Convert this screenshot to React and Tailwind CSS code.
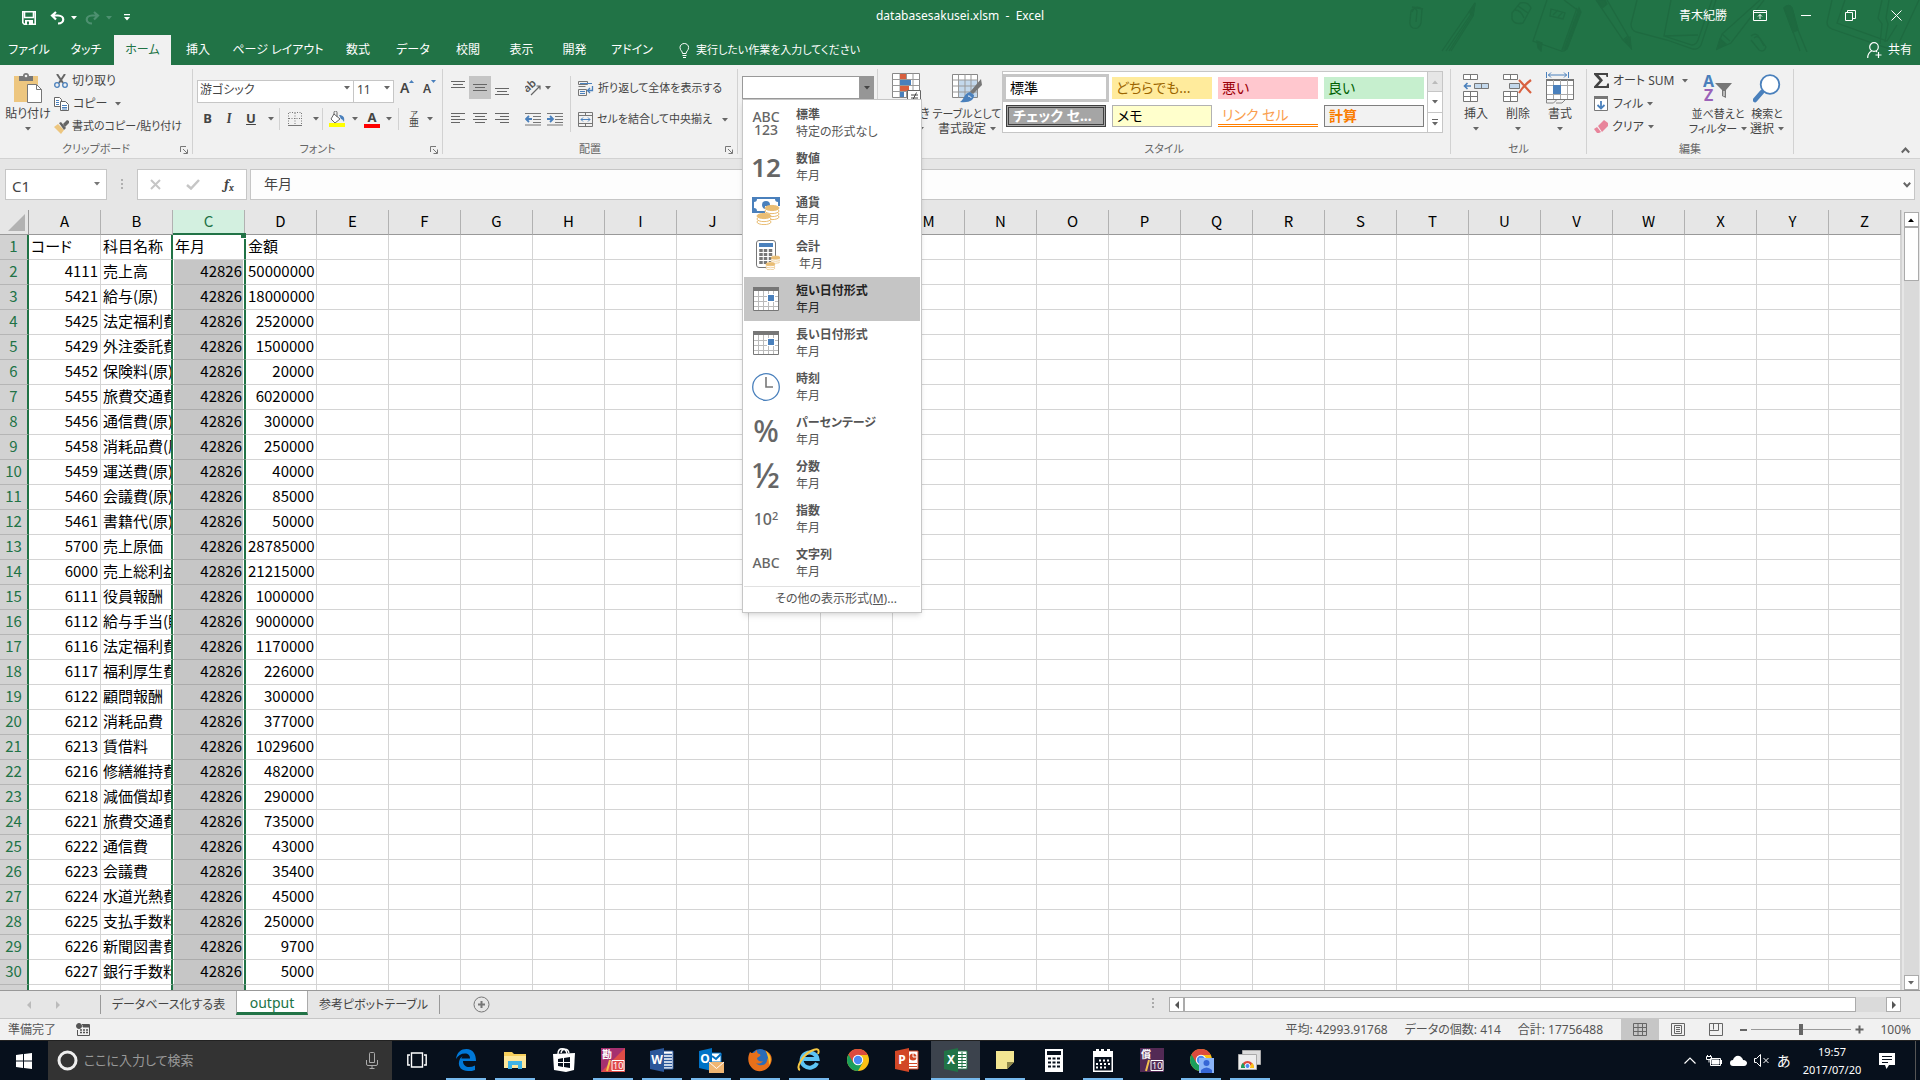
import React, { useState } from 'react';

const columns = 'ABCDEFGHIJKLMNOPQRSTUVWXYZ'.split('');

const rows = [
  ['コード', '科目名称', '年月', '金額'],
  [4111, '売上高', 42826, 50000000],
  [5421, '給与(原)', 42826, 18000000],
  [5425, '法定福利費(原)', 42826, 2520000],
  [5429, '外注委託費(原)', 42826, 1500000],
  [5452, '保険料(原)', 42826, 20000],
  [5455, '旅費交通費(原)', 42826, 6020000],
  [5456, '通信費(原)', 42826, 300000],
  [5458, '消耗品費(原)', 42826, 250000],
  [5459, '運送費(原)', 42826, 40000],
  [5460, '会議費(原)', 42826, 85000],
  [5461, '書籍代(原)', 42826, 50000],
  [5700, '売上原価', 42826, 28785000],
  [6000, '売上総利益', 42826, 21215000],
  [6111, '役員報酬', 42826, 1000000],
  [6112, '給与手当(販)', 42826, 9000000],
  [6116, '法定福利費', 42826, 1170000],
  [6117, '福利厚生費', 42826, 226000],
  [6122, '顧問報酬', 42826, 300000],
  [6212, '消耗品費', 42826, 377000],
  [6213, '賃借料', 42826, 1029600],
  [6216, '修繕維持費', 42826, 482000],
  [6218, '減価償却費', 42826, 290000],
  [6221, '旅費交通費', 42826, 735000],
  [6222, '通信費', 42826, 43000],
  [6223, '会議費', 42826, 35400],
  [6224, '水道光熱費', 42826, 45000],
  [6225, '支払手数料', 42826, 250000],
  [6226, '新聞図書費', 42826, 9700],
  [6227, '銀行手数料', 42826, 5000],
];

const ribbonTabs = [
  { label: 'ファイル', width: 'w-[58px]' },
  { label: 'タッチ', width: 'w-[56px]' },
  { label: 'ホーム', width: 'w-[57px]' },
  { label: '挿入', width: 'w-[54px]' },
  { label: 'ページ レイアウト', width: 'w-[106px]' },
  { label: '数式', width: 'w-[54px]' },
  { label: 'データ', width: 'w-[56px]' },
  { label: '校閲', width: 'w-[54px]' },
  { label: '表示', width: 'w-[53px]' },
  { label: '開発', width: 'w-[53px]' },
  { label: 'アドイン', width: 'w-[62px]' },
];

/* ---------- small shared pieces ---------- */

const Caret = ({ className = 'text-[#666]' }) => (
  <svg width="6" height="4" viewBox="0 0 6 4" className={`shrink-0 ${className}`} aria-hidden="true">
    <path d="M0 0h6L3 3.5z" fill="currentColor" />
  </svg>
);

const Launcher = () => (
  <button aria-label="詳細" className="absolute right-1 bottom-0 h-2 w-2">
    <svg width="8" height="8" viewBox="0 0 8 8" fill="none" stroke="#777">
      <path d="M.5 6V.5H6M3 3l4 4M7.500 3.500v4h-4" />
    </svg>
  </button>
);

const Group = ({ title, width, launcher, children }) => (
  <section className={`relative my-1 flex shrink-0 flex-col border-r border-[#d2d2d2] ${width}`}>
    <div className="flex flex-1">{children}</div>
    <h2 className="h-[14px] text-center text-[11px] leading-[18px] text-[#666]">{title}</h2>
    {launcher && <Launcher />}
  </section>
);

const Divider = () => <span className="h-[22px] w-px bg-[#d2d2d2]" />;

const IconButton = ({ label, width = 'w-[22px]', active, children }) => (
  <button aria-label={label} className={`flex h-[23px] ${width} items-center justify-center ${active ? 'bg-[#c5c5c5]' : ''}`}>
    {children}
  </button>
);

const SmallButton = ({ icon, label, caret, wide }) => (
  <button className="flex h-[23px] items-center gap-1 text-xs leading-4 whitespace-nowrap">
    {icon}
    <span>{label}</span>
    {caret && <Caret className={wide ? 'ml-1 text-[#666]' : 'text-[#666]'} />}
  </button>
);

const BigButton = ({ icon, line1, line2, width }) => (
  <button className={`flex flex-col items-center pt-1 text-xs leading-[15px] whitespace-nowrap ${width}`}>
    <span className="flex h-[30px] items-center justify-center">{icon}</span>
    <span className="mt-[3px]">{line1}</span>
    <span className="flex h-[15px] items-center gap-1">
      {line2}
      <Caret />
    </span>
  </button>
);

const Lines = ({ d }) => (
  <svg width="14" height="14" viewBox="0 0 14 14" stroke="#666" fill="none" aria-hidden="true">
    <path d={d} />
  </svg>
);

/* ---------- ribbon icons ---------- */

const PasteIcon = () => (
  <svg width="30" height="30" viewBox="0 0 30 30">
    <rect x="1" y="3" width="24" height="26" fill="#edc67f" />
    <path d="M6 8V3h4a3 3 0 0 1 6 0h4v5z" fill="#777" />
    <circle cx="13" cy="3" r="1.300" fill="#f1f1f1" />
    <path d="M14.500 11.500h9l5 5v13h-14z" fill="#fff" stroke="#777" />
    <path d="M23.500 11.500v5h5" fill="none" stroke="#777" />
  </svg>
);

const CutIcon = () => (
  <svg width="14" height="14" viewBox="0 0 14 14" fill="none">
    <path d="M3 0l6 9M11 0L5 9" stroke="#666" strokeWidth="2" />
    <circle cx="3" cy="11" r="2.300" stroke="#4a80bc" strokeWidth="1.300" />
    <circle cx="11" cy="11" r="2.300" stroke="#4a80bc" strokeWidth="1.300" />
  </svg>
);

const CopyIcon = () => (
  <svg width="15" height="14" viewBox="0 0 15 14" fill="#fff" stroke="#666">
    <path d="M.5.500h5l2 2v7h-7z" />
    <path d="M2 3.500h3M2 5.500h3M2 7.500h3" stroke="#4a80bc" />
    <path d="M6.500 4.500h5l3 3v6h-8z" />
    <path d="M8 8.500h5M8 10.500h5M8 12h5" stroke="#4a80bc" />
  </svg>
);

const PainterIcon = () => (
  <svg width="16" height="14" viewBox="0 0 16 14">
    <path d="M0 7l4-3 6 6-3 4z" fill="#edc67f" />
    <path d="M5 3l2-1 5 6-2 2z" fill="#666" />
    <path d="M9 4l4-4 2 1v2l-4 4z" fill="#666" />
  </svg>
);

const WrapIcon = () => (
  <svg width="16" height="15" viewBox="0 0 16 15" fill="none">
    <path d="M.5.500h9v3h-9zM.5 5.500h7M.5 8.500h8v6h-8z" stroke="#777" />
    <path d="M2 2.500h12M2 10.500h5M2 12.500h5" stroke="#4a80bc" />
    <path d="M14.500 5v4.500h-5M12 7l-2.500 2.500L12 12" stroke="#4a80bc" strokeWidth="1.300" />
  </svg>
);

const MergeIcon = () => (
  <svg width="15" height="15" viewBox="0 0 15 15" fill="none">
    <path d="M.5.500h14v14H.5zM.5 3.500h14M.5 11.500h14M7.500.500v3M7.500 11.500v3" stroke="#777" />
    <path d="M3 7.500h9M5 5.500l-2 2 2 2M10 5.500l2 2-2 2" stroke="#4a80bc" />
  </svg>
);

const IndentIcon = ({ flip }) => (
  <svg width="16" height="14" viewBox="0 0 16 14" fill="none">
    <path d="M0 1.500h16M8 4.500h8M8 7.500h8M8 10.500h8M0 13h16" stroke="#777" />
    {flip ? (
      <path d="M0 7h5M3 4l3 3-3 3" stroke="#4a80bc" strokeWidth="1.800" />
    ) : (
      <path d="M7 7H2M4 4L1 7l3 3" stroke="#4a80bc" strokeWidth="1.800" />
    )}
  </svg>
);

const OrientationIcon = () => (
  <svg width="17" height="17" viewBox="0 0 17 17">
    <text x="0" y="11" fontSize="11" fontWeight="600" fontFamily="Noto Sans" fill="#555" transform="rotate(-42 5 10)">ab</text>
    <path d="M6 16l9-9M11.500 7H15v3.500" stroke="#666" fill="none" strokeWidth="1.200" />
  </svg>
);

const BucketIcon = () => (
  <svg width="17" height="16" viewBox="0 0 17 16">
    <path d="M5 3l6 5-5 4-4-4z" fill="#fff" stroke="#666" />
    <path d="M5 4V1.500a1.500 1.500 0 0 1 3 0V6" fill="none" stroke="#666" />
    <path d="M10 4c4 0 6 2 5 7-1-2-2-3-3-3z" fill="#4a80bc" />
    <rect x="0" y="12" width="16" height="4" fill="#ff0" />
  </svg>
);

const ConditionalIcon = () => (
  <svg width="30" height="30" viewBox="0 0 30 30">
    <path d="M.5.500h27v24H.5z" fill="#fff" stroke="#888" />
    <path d="M.5 6.500h27M.5 12.500h27M.5 18.500h27M8 .5v24M14.500.500v24M21 .5v24" stroke="#999" />
    <path d="M8 1h6v5H8zM8 13h9v5H8z" fill="#d9603f" />
    <path d="M8 7h11v5H8zM8 19h4v5H8z" fill="#4a80bc" />
    <path d="M15.500 17.500h13v12h-13z" fill="#fff" stroke="#666" />
    <path d="M19 22h7M19 25h7M24.500 19.500l-4 8" stroke="#444" />
  </svg>
);

const TableFormatIcon = () => (
  <svg width="30" height="29" viewBox="0 0 30 29">
    <path d="M.5.500h25v23H.5z" fill="#fff" stroke="#888" />
    <path d="M7 6h18v17H7z" fill="#c3d8ec" />
    <path d="M.5 6h25M.5 12h25M.5 18h25M6.500.500v23M13 .5v23M19 .5v23" stroke="#999" />
    <path d="M29 5l1 6-9 9-3-2z" fill="#777" />
    <path d="M18 18l4 3c0 5-4 8-14 7 4-2 4-9 10-10z" fill="#4a80bc" />
    <path d="M16 22c2 0 3 1 3 2" stroke="#fff" fill="none" />
  </svg>
);

const InsertIcon = () => (
  <svg width="26" height="28" viewBox="0 0 26 28" fill="#fff" stroke="#777">
    <path d="M.5.500h14v5H.5zM7.500.500v5M.5 17.500h14v10H.5zM7.500 17.500v10M.5 22.500h14" />
    <path d="M11.500 9.500h14v5h-14zM18.500 9.500v5" fill="#c3d8ec" />
    <path d="M8 12H2M4.500 9L1.500 12l3 3" fill="none" stroke="#4a80bc" strokeWidth="1.600" />
  </svg>
);

const DeleteIcon = () => (
  <svg width="30" height="28" viewBox="0 0 30 28" fill="#fff" stroke="#777">
    <path d="M.5.500h14v5H.5zM7.500.500v5M.5 17.500h14v10H.5zM7.500 17.500v10M.5 22.500h14" />
    <path d="M6.500 9.500h10v5h-10z" fill="#c3d8ec" />
    <path d="M16 6c4 4 8 9 12 13M28 6c-4 3-9 8-12 13" fill="none" stroke="#d9603f" strokeWidth="2.200" />
  </svg>
);

const FormatIcon = () => (
  <svg width="28" height="32" viewBox="0 0 28 32" fill="none">
    <path d="M.5 0v6M22.500 0v6M2 3h19M5 .5L2.500 3 5 5.500M18 .5L20.500 3 18 5.500" stroke="#4a80bc" />
    <path d="M.5 7.500h27v20H.5z" fill="#fff" stroke="#777" />
    <path d="M0 7h28v2H0z" fill="#777" />
    <path d="M7.500 8v19M14.500 8v19M21.500 8v19M1 13.500h26M1 22.500h26" stroke="#aaa" />
    <path d="M7 13h8v9H7z" fill="#4a80bc" />
    <path d="M.5 28v3h7l3-3M10 31h6l3-3" stroke="#888" />
  </svg>
);

const SortIcon = () => (
  <svg width="30" height="30" viewBox="0 0 30 30">
    <text x="0" y="14" fontSize="16" fontWeight="700" fontFamily="Noto Sans" fill="#4a80bc">A</text>
    <text x="1" y="28" fontSize="16" fontWeight="700" fontFamily="Noto Sans" fill="#9b62b8">Z</text>
    <path d="M12 10h17l-6 7v8l-4-2v-6z" fill="#777" />
    <path d="M21 18v5" stroke="#fff" />
  </svg>
);

const FindIcon = () => (
  <svg width="28" height="29" viewBox="0 0 28 29" fill="none" stroke="#4a80bc">
    <path d="M9 18l-7 8" strokeWidth="4.500" strokeLinecap="round" />
    <circle cx="17" cy="10.500" r="9.300" fill="#fff" strokeWidth="1.800" />
  </svg>
);

const SigmaIcon = () => (
  <svg width="15" height="15" viewBox="0 0 15 15">
    <path d="M0 0h14v4h-1.500l-.5-2H4.500L9 7.200 4 13h8.500l.8-2.500H15V15H0v-1.500L5.500 7.500 0 1.500z" fill="#444" />
  </svg>
);

const FillIcon = () => (
  <svg width="15" height="16" viewBox="0 0 15 16" fill="none">
    <path d="M.5 1.500h13v13H.5z" fill="#fff" stroke="#777" />
    <path d="M0 0h14v3H0z" fill="#777" />
    <path d="M7 5v7M3.500 9L7 12.500 10.500 9" stroke="#4a80bc" strokeWidth="1.800" />
  </svg>
);

const EraserIcon = () => (
  <svg width="14" height="13" viewBox="0 0 14 13">
    <path d="M4 6l6-6 4 3v3l-6 6z" fill="#e8859b" />
    <path d="M3 7l4 5-2 1H3L0 9z" fill="#e8859b" />
  </svg>
);

/* ---------- number format menu ---------- */

const CalendarGlyph = () => (
  <svg width="26" height="24" viewBox="0 0 26 24">
    <path d="M.5.500h25v23H.5z" fill="#fff" stroke="#777" />
    <path d="M0 0h26v4H0z" fill="#777" />
    <path d="M5.500 4v19M10.500 4v19M15.500 4v19M20.500 4v19M1 9.500h24M1 14.500h24M1 19.500h24" stroke="#bbb" />
    <path d="M14 7h8v8h-8z" fill="#fff" />
    <path d="M15 8h6v6h-6z" fill="#4a80bc" />
  </svg>
);

const Coins = ({ x, y, n }) => (
  <g>
    {Array.from({ length: n }, (_, i) => (
      <ellipse key={i} cx={x} cy={y + (n - 1 - i) * 3} rx="7" ry="2.600" fill={i === n - 1 ? '#e9bd74' : '#fff'} stroke="#e9bd74" />
    ))}
  </g>
);

const MoneyGlyph = () => (
  <svg width="28" height="28" viewBox="0 0 28 28">
    <path d="M0 0h28v16H0z" fill="#4a80bc" />
    <path d="M5 2h18q0 3 3 3v6q-3 0-3 3H5q0-3-3-3V5q3 0 3-3z" fill="#fff" />
    <circle cx="14" cy="8" r="4" fill="#4a80bc" />
    <path d="M13 9h15v14H13z" fill="#fff" />
    <Coins x={20} y={11} n={4} />
    <Coins x={12} y={19} n={3} />
  </svg>
);

const CalculatorGlyph = () => (
  <svg width="28" height="30" viewBox="0 0 28 30">
    <rect x="4.500" y=".5" width="19" height="27" rx="2.500" fill="#fff" stroke="#777" />
    <path d="M7 3h14v4H7z" fill="#4a80bc" />
    <path d="M9 9v16M13.500 9v16M18.500 9v16" stroke="#777" strokeWidth="3.500" strokeDasharray="3 1" />
    <path d="M20 16h8v8h-8zM15 22h10v7H15z" fill="#fff" />
    <g transform="translate(8 4) scale(.65)">
      <Coins x={24} y={21} n={3} />
      <Coins x={16} y={31} n={3} />
    </g>
  </svg>
);

const ClockGlyph = () => (
  <svg width="28" height="28" viewBox="0 0 28 28" fill="none">
    <circle cx="14" cy="14" r="13.300" fill="#fff" stroke="#4a80bc" strokeWidth="1.300" />
    <path d="M14 4v10h7" stroke="#777" strokeWidth="1.600" />
  </svg>
);

const formats = [
  { name: '標準', sample: '特定の形式なし', icon: <span className="text-center text-sm leading-[13px] font-medium">ABC<br />123</span> },
  { name: '数値', sample: '年月', icon: <span className="text-[26px] font-semibold">12</span> },
  { name: '通貨', sample: '年月', icon: <MoneyGlyph /> },
  { name: '会計', sample: '\u00a0年月', icon: <CalculatorGlyph /> },
  { name: '短い日付形式', sample: '年月', icon: <CalendarGlyph /> },
  { name: '長い日付形式', sample: '年月', icon: <CalendarGlyph /> },
  { name: '時刻', sample: '年月', icon: <ClockGlyph /> },
  { name: 'パーセンテージ', sample: '年月', icon: <span className="text-[30px] font-medium">%</span> },
  { name: '分数', sample: '年月', icon: <span className="text-[34px] font-medium">½</span> },
  { name: '指数', sample: '年月', icon: <span className="text-base font-medium">10<sup className="text-[11px]">2</sup></span> },
  { name: '文字列', sample: '年月', icon: <span className="text-sm font-medium">ABC</span> },
];

const FormatMenu = () => (
  <div role="menu" className="absolute top-full left-0 z-20 w-[180px] border border-[#c6c6c6] bg-white p-px shadow-md">
    {formats.map((f) => (
      <button
        key={f.name}
        role="menuitem"
        className={`flex h-11 w-full items-center text-left ${f.name === '短い日付形式' ? 'bg-[#c5c5c5] text-[#222]' : 'text-[#555]'}`}>
        <span className="flex w-[44px] shrink-0 items-center justify-center leading-none text-[#666]">{f.icon}</span>
        <span className="ml-2 text-xs leading-[17px] whitespace-nowrap">
          <b className="block">{f.name}</b>
          <span className="block">{f.sample}</span>
        </span>
      </button>
    ))}
    <button role="menuitem" className="h-[25px] w-full border-t border-[#e1e1e1] pl-2 text-center text-xs text-[#555]">
      その他の表示形式(<u>M</u>)...
    </button>
  </div>
);

/* ---------- title bar and tabs ---------- */

const Doodles = () => (
  <svg className="absolute top-0 right-0" width="520" height="52" viewBox="0 0 520 52" fill="none" stroke="#1e6a40" strokeWidth="1.300" aria-hidden="true">
    <path d="M12 12q3-8 10-3l-1 14q-2 7-8 5-4-2-3-7l1-10q4-5 6 0l-1 11M12 7l11 2" />
    <path d="M42 51l27-39 6-9-2 13-22 35M46 51l25-37M49 51l23-36M69 12l5 3" />
    <path d="M112 13l8-10q8-2 11 5l-8 15q-9 2-11-4zM115 10q6 0 9 8M118 6l10 7" />
    <path d="M147 0l-14 41 28 10q4 1 6-3l13-36-16-12M177 8l-15 42M151 9l14 4-2 6-13-3zM153 15l5-5M158 17l5-5" />
    <path d="M196 0l27 40 8 8-3-12L207 0M223 40l5-4" />
    <path d="M237 0l-6 24q0 6 5 8l31 8 26 9q5 1 8-4l15-45M271 0l-7 36 34-1M264 36l28 9q4 0 6-5l14-40" />
    <path d="M360 0l-38 34-5 15 14-6 33-43M322 34l8 7" />
    <path d="M351 36q5-4 8 1l7 10q-2 6-7 3l-8-10M354 38q4-3 6 1l4 7" />
    <path d="M384 8q5-5 8 0l6 22 9 22M384 8l9 24 7 19" />
    <path d="M432 0l-5 22q0 5 5 7l58 20q6 1 8-4l21-45M445 0l-8 23 50 18 10-16M482 0l-4 18 4 6-2 20M489 0l-3 18 2 6-3 18" />
    <path d="M384 8q5-5 8 0l6 22-5 2zM317 49l3-10 6 5zM225 40l5-3 1 11zM197 0h8l2 4-5 4zM69 12l6-9-2 12zM137 41l5 2-1 8-3-3zM164 49l15-41 2 4-14 37z" fill="#1e6a40" />
  </svg>
);

const TitleBar = () => (
  <header className="relative bg-[#217346] text-white">
    <Doodles />
    <div className="relative grid h-[35px] grid-cols-3 items-center text-xs">
      <div className="flex items-center pl-[22px]">
        <button aria-label="上書き保存" className="w-[28px]">
          <svg width="14" height="14" viewBox="0 0 14 14" fill="none" stroke="#fff" strokeWidth="1.600">
            <path d="M.8.800h12.400v12.400H2.300L.8 11.700z" />
            <path d="M2.500 1v5.500h9V1" />
            <path d="M3 9h8v4H3z" fill="#fff" stroke="none" />
            <path d="M5 10.500h2v3H5z" fill="#217346" stroke="none" />
          </svg>
        </button>
        <button aria-label="元に戻す" className="flex w-[35px] items-center gap-[6px]">
          <svg width="15" height="14" viewBox="0 0 15 14" fill="none" stroke="#fff" strokeWidth="2.200">
            <path d="M6 1L2 4.500 6 8.500M2 4.500h6c7 0 7 8 0 8" />
          </svg>
          <Caret className="text-white" />
        </button>
        <button aria-label="やり直し" className="flex w-[39px] items-center gap-[6px]">
          <svg width="15" height="14" viewBox="0 0 15 14" fill="none" stroke="#4d9070" strokeWidth="2.200">
            <path d="M9 1l4 3.500-4 4M13 4.500H7c-7 0-7 8 0 8" />
          </svg>
          <Caret className="text-[#4d9070]" />
        </button>
        <button aria-label="クイック アクセス ツール バーのカスタマイズ">
          <svg width="6" height="7" viewBox="0 0 6 7" fill="#fff">
            <path d="M0 0h6v1.300H0zM0 3h6L3 6.500z" />
          </svg>
        </button>
      </div>
      <h1 className="pb-1 text-center whitespace-pre">databasesakusei.xlsm  -  Excel</h1>
      <div className="flex items-center justify-end pb-1">
        <span className="mr-[26px]">青木紀勝</span>
        <button aria-label="リボンの表示オプション" className="flex w-[46px]">
          <svg width="14" height="11" viewBox="0 0 14 11" fill="none" stroke="#fff">
            <path d="M.5.500h13v10H.5zM.5 2.500h13M7 9V4.500M5 6.500l2-2 2 2" />
          </svg>
        </button>
        <button aria-label="最小化" className="flex w-[46px]">
          <svg width="14" height="11" viewBox="0 0 14 11"><path d="M2 5.500h10" stroke="#fff" /></svg>
        </button>
        <button aria-label="元に戻す (縮小)" className="flex w-[46px]">
          <svg width="11" height="11" viewBox="0 0 11 11" fill="none" stroke="#fff">
            <path d="M.5 2.500h7v8h-7zM2.500 2.500v-2h8v8h-3" />
          </svg>
        </button>
        <button aria-label="閉じる" className="flex w-[29px]">
          <svg width="11" height="11" viewBox="0 0 11 11" stroke="#fff"><path d="M.5.500l10 10M10.500.500l-10 10" /></svg>
        </button>
      </div>
    </div>
    <nav className="relative flex h-[30px] text-xs">
      {ribbonTabs.map((t) => (
        <button key={t.label} className={`${t.width} whitespace-nowrap ${t.label === 'ホーム' ? 'bg-[#f1f1f1] text-[#217346]' : ''}`}>
          {t.label}
        </button>
      ))}
      <label className="ml-4 flex flex-1 items-center gap-[6px]">
        <svg width="11" height="15" viewBox="0 0 11 15" fill="none" stroke="#fff">
          <path d="M3.500 10.500C3.500 8 1 7.500 1 4.500a4.300 4 0 0 1 8.600 0c0 3-2.500 3.500-2.500 6zM3.500 12.500h4M4 14.500h3" />
        </svg>
        <input placeholder="実行したい作業を入力してください" className="w-[200px] bg-transparent text-[11px] placeholder:text-white" />
      </label>
      <button className="flex items-center gap-[6px] pr-2">
        <svg width="15" height="17" viewBox="0 0 15 17" fill="none" stroke="#fff" strokeWidth="1.200">
          <circle cx="7" cy="5" r="4.300" />
          <path d="M.7 16c0-4 2-6 4-7M9 9l1 1M11.500 10v6M8.500 13h6" />
        </svg>
        共有
      </button>
    </nav>
  </header>
);

/* ---------- ribbon ---------- */

const cellStyles = [
  { label: '標準', look: 'bg-white text-black outline-3 outline-[#c6c6c6]' },
  { label: 'どちらでも...', look: 'bg-[#ffeb9c] text-[#9c6500]' },
  { label: '悪い', look: 'bg-[#ffc7ce] text-[#9c0006]' },
  { label: '良い', look: 'bg-[#c6efce] text-[#006100]' },
  { label: 'チェック セ...', look: 'border-3 border-double border-[#3f3f3f] bg-[#a5a5a5] font-bold text-white' },
  { label: 'メモ', look: 'border border-[#b2b2b2] bg-[#ffffcc] text-black' },
  { label: 'リンク セル', look: 'border-b-3 border-double border-[#ff8001] text-[#fa9d4d]' },
  { label: '計算', look: 'border border-[#7f7f7f] bg-[#f2f2f2] font-bold text-[#fa7d00]' },
];

const Ribbon = () => {
  const [font, setFont] = useState('游ゴシック');
  const [size, setSize] = useState('11');

  return (
    <div className="relative z-10 flex h-[94px] border-b border-[#d2d2d2] bg-[#f1f1f1] text-[#444]">
      <Group title="クリップボード" width="w-[193px]" launcher>
        <BigButton width="w-[54px] pl-[2px]" icon={<PasteIcon />} line1="貼り付け" />
        <div className="flex flex-col">
          <SmallButton icon={<CutIcon />} label="切り取り" />
          <SmallButton icon={<CopyIcon />} label="コピー" caret wide />
          <button className="flex h-[23px] items-center gap-[2px] text-[11px] whitespace-nowrap">
            <PainterIcon />
            書式のコピー/貼り付け
          </button>
        </div>
      </Group>

      <Group title="フォント" width="w-[250px]" launcher>
        <div className="flex flex-col pl-1">
          <div className="mt-[7px] flex h-[23px]">
            <div className="relative">
              <select aria-label="フォント名" value={font} onChange={(e) => setFont(e.target.value)} className="h-[23px] w-[157px] appearance-none border border-[#c6c6c6] bg-white pb-[2px] pl-[2px] text-xs">
                <option>游ゴシック</option>
              </select>
              <span className="pointer-events-none absolute top-[10px] right-1"><Caret /></span>
            </div>
            <div className="relative">
              <select aria-label="フォント サイズ" value={size} onChange={(e) => setSize(e.target.value)} className="h-[23px] w-[40px] appearance-none border border-l-0 border-[#c6c6c6] bg-white pb-[2px] pl-[3px] text-xs">
                <option>11</option>
              </select>
              <span className="pointer-events-none absolute top-[10px] right-1"><Caret /></span>
            </div>
            <button aria-label="拡大" className="ml-[6px] flex w-[23px] text-[14px] leading-6 font-semibold">
              A<svg width="5" height="4" className="mt-1"><path d="M0 3l2.500-3L5 3z" fill="#4a80bc" /></svg>
            </button>
            <button aria-label="縮小" className="flex text-[12px] leading-[26px] font-semibold">
              A<svg width="5" height="4" className="mt-1"><path d="M0 0l2.500 3L5 0z" fill="#4a80bc" /></svg>
            </button>
          </div>
          <div className="mt-2 flex h-[23px] items-center text-[13px]">
            <button aria-label="太字" className="w-[21px] font-bold">B</button>
            <button aria-label="斜体" className="w-[22px] font-serif font-bold italic">I</button>
            <button aria-label="下線" className="w-[22px] font-bold underline">U</button>
            <IconButton label="下線の種類" width="w-[17px]"><Caret /></IconButton>
            <Divider />
            <IconButton label="罫線" width="w-[30px]">
              <svg width="14" height="14" viewBox="0 0 14 14" fill="none" stroke="#777">
                <path d="M.5 12V.500h13V12M7 1v11M1 6.500h12" strokeDasharray="1 1.500" />
                <path d="M0 13.500h14" />
              </svg>
            </IconButton>
            <IconButton label="罫線の種類" width="w-[12px]"><Caret /></IconButton>
            <Divider />
            <IconButton label="塗りつぶしの色" width="w-[29px]"><BucketIcon /></IconButton>
            <IconButton label="色の選択" width="w-[6px]"><Caret /></IconButton>
            <button aria-label="フォントの色" className="ml-[6px] w-4 border-b-4 border-[#f00] text-center leading-[14px] font-bold">A</button>
            <IconButton label="文字色の選択" width="w-[18px]"><Caret /></IconButton>
            <Divider />
            <button aria-label="ふりがな" className="ml-[6px] flex w-[18px] flex-col items-center leading-none">
              <span className="text-[8px] leading-[7px]">ア</span>
              <span className="text-[10px] leading-[10px]">亜</span>
            </button>
            <IconButton label="ふりがなの設定" width="w-[14px]"><Caret /></IconButton>
          </div>
        </div>
      </Group>

      <Group title="配置" width="w-[295px]" launcher>
        <div className="flex flex-col pt-[7px] pl-1">
          <div className="flex h-[23px] items-center">
            <IconButton label="上揃え"><Lines d="M0 .5h14M2 3.500h10M0 6.500h14" /></IconButton>
            <IconButton label="上下中央揃え" active><Lines d="M0 3.500h14M2 6.500h10M0 9.500h14" /></IconButton>
            <IconButton label="下揃え"><Lines d="M0 7.500h14M2 10.500h10M0 13.500h14" /></IconButton>
            <span className="ml-1"><Divider /></span>
            <button aria-label="方向" className="ml-2 flex items-center gap-[3px]"><OrientationIcon /><Caret /></button>
          </div>
          <div className="mt-2 flex h-[23px] items-center">
            <IconButton label="左揃え"><Lines d="M0 1.500h14M0 4.500h9M0 7.500h14M0 10.500h9" /></IconButton>
            <IconButton label="中央揃え"><Lines d="M0 1.500h14M2 4.500h10M0 7.500h14M2 10.500h10" /></IconButton>
            <IconButton label="右揃え"><Lines d="M0 1.500h14M5 4.500h9M0 7.500h14M5 10.500h9" /></IconButton>
            <span className="ml-1"><Divider /></span>
            <span className="ml-[5px] flex">
              <IconButton label="インデントを減らす"><IndentIcon /></IconButton>
              <IconButton label="インデントを増やす"><IndentIcon flip /></IconButton>
            </span>
          </div>
        </div>
        <div className="mt-[7px] ml-1 flex h-[56px] flex-col justify-between border-l border-[#d2d2d2] pl-[7px] text-[11px] whitespace-nowrap">
          <button className="flex h-[25px] items-center gap-1"><WrapIcon />折り返して全体を表示する</button>
          <button className="flex h-[25px] items-center gap-1"><MergeIcon />セルを結合して中央揃え<span className="ml-[6px]"><Caret /></span></button>
        </div>
      </Group>

      <Group title="数値" width="w-[140px]">
        <div className="relative mt-[7px] ml-1 flex h-[23px]">
          <input aria-label="表示形式" className="h-[23px] w-[118px] border border-[#999] bg-white" />
          <button aria-label="表示形式の一覧" aria-expanded="true" className="flex h-[23px] w-[14px] items-center justify-center bg-[#969696]">
            <Caret className="text-[#444]" />
          </button>
          <FormatMenu />
        </div>
      </Group>

      <Group title="スタイル" width="w-[573px]">
        <BigButton width="w-[52px] pl-[5px]" icon={<ConditionalIcon />} line1="条件付き" line2="書式" />
        <BigButton width="w-[72px] pl-[2px]" icon={<TableFormatIcon />} line1={<span className="text-[11px]">テーブルとして</span>} line2="書式設定" />
        <div className="mt-[2px] flex h-[62px] border border-[#c6c6c6] bg-white">
          <div className="grid grid-cols-4 gap-[6px] py-[5px] pr-[3px] pl-[3px]">
            {cellStyles.map((s) => (
              <button key={s.label} className={`h-[22px] w-[100px] overflow-hidden px-1 text-left text-[14px] leading-4 whitespace-nowrap ${s.look}`}>
                {s.label}
              </button>
            ))}
          </div>
          <div className="flex w-[15px] flex-col divide-y divide-[#c6c6c6] border-l border-[#c6c6c6]">
            <button aria-label="前の行" className="flex flex-1 items-center justify-center bg-[#e6e6e6]">
              <Caret className="rotate-180 text-[#bbb]" />
            </button>
            <button aria-label="次の行" className="flex flex-1 items-center justify-center"><Caret /></button>
            <button aria-label="その他" className="flex flex-1 flex-col items-center justify-center gap-[2px]">
              <span className="h-px w-[6px] bg-[#666]" />
              <Caret />
            </button>
          </div>
        </div>
      </Group>

      <Group title="セル" width="w-[136px]">
        <div className="flex pl-1">
          <BigButton width="w-[42px]" icon={<InsertIcon />} line1="挿入" />
          <BigButton width="w-[42px]" icon={<DeleteIcon />} line1="削除" />
          <BigButton width="w-[42px]" icon={<FormatIcon />} line1="書式" />
        </div>
      </Group>

      <Group title="編集" width="w-[207px]">
        <div className="flex w-[104px] shrink-0 flex-col pl-[7px]">
          <SmallButton icon={<SigmaIcon />} label="オート SUM" caret wide />
          <SmallButton icon={<FillIcon />} label="フィル" caret />
          <SmallButton icon={<EraserIcon />} label="クリア" caret />
        </div>
        <BigButton width="w-[54px]" icon={<SortIcon />} line1={<span className="text-[11px]">並べ替えと</span>} line2={<span className="text-[11px]">フィルター</span>} />
        <BigButton width="w-[44px]" icon={<FindIcon />} line1={<span className="text-[11px]">検索と</span>} line2="選択" />
      </Group>

      <button aria-label="リボンを折りたたむ" className="ml-auto self-end pr-[10px] pb-[4px]">
        <svg width="9" height="7" viewBox="0 0 9 7" fill="none" stroke="#666" strokeWidth="2"><path d="M.8 5.500l3.700-4 3.700 4" /></svg>
      </button>
    </div>
  );
};

const FormulaBar = () => (
  <div className="flex bg-[#e6e6e6] px-[5px] pt-[10px] pb-[10px] text-[#444]">
    <div className="relative">
      <input aria-label="名前ボックス" defaultValue="C1" className="h-[31px] w-[102px] border border-[#c6c6c6] bg-white pt-[2px] pl-[6px] text-[15px]" />
      <span className="absolute top-[13px] right-[7px]"><Caret className="text-[#777]" /></span>
    </div>
    <svg width="30" height="31" viewBox="0 0 30 31" fill="#b0b0b0"><path d="M14 10h2v2h-2zM14 14h2v2h-2zM14 18h2v2h-2z" /></svg>
    <div className="flex h-[31px] w-[110px] items-center justify-around border border-[#c6c6c6] bg-white">
      <button aria-label="キャンセル">
        <svg width="11" height="11" viewBox="0 0 11 11" stroke="#c6c6c6" strokeWidth="2"><path d="M1 1l9 9M10 1l-9 9" /></svg>
      </button>
      <button aria-label="入力">
        <svg width="14" height="11" viewBox="0 0 14 11" fill="none" stroke="#c6c6c6" strokeWidth="2.500"><path d="M1 6l4 3.500L13 1" /></svg>
      </button>
      <button aria-label="関数の挿入" className="font-serif text-sm leading-5 font-bold italic">f<sub className="text-[10px]">x</sub></button>
    </div>
    <input aria-label="数式バー" defaultValue="年月" className="ml-[3px] h-[31px] min-w-0 flex-1 border border-r-0 border-[#c6c6c6] bg-[#fdfdfd] pb-1 pl-[13px] font-['Noto_Sans_CJK_JP',sans-serif] text-sm" />
    <button aria-label="数式バーの展開" className="flex h-[31px] w-[16px] items-center justify-center border border-l-0 border-[#c6c6c6] bg-[#fdfdfd]">
      <svg width="8" height="6" viewBox="0 0 8 6" fill="none" stroke="#666" strokeWidth="2"><path d="M.8.800L4 4.200 7.200.800" /></svg>
    </button>
  </div>
);

/* ---------- sheet ---------- */

const columnLook = (ci) => {
  if (ci === 1) return 'border-r-2 border-r-[#217346]';
  if (ci === 2) return 'border-r border-r-[#217346]';
  if (ci === 3) return 'border-l border-l-[#217346] border-r border-r-[#d4d4d4]';
  return 'border-r border-r-[#d4d4d4]';
};

const Sheet = () => (
  <main className="flex min-h-0 flex-1 overflow-hidden border-b border-[#999] bg-[#e6e6e6]">
    <div className="min-w-0 flex-1 overflow-hidden">
      <table className="w-full table-fixed border-separate border-spacing-0 font-['Noto_Sans_CJK_JP',sans-serif] text-[15px] leading-[22px] text-black">
        <colgroup>
          <col className="w-[29px]" />
          {columns.map((c) => <col key={c} />)}
        </colgroup>
        <thead>
          <tr className="h-[25px] bg-[#e6e6e6]">
            <th className="border-r border-b border-[#999] p-0" aria-label="すべて選択">
              <svg width="17" height="17" viewBox="0 0 17 17" className="ml-[8px]"><path d="M17 0v17H0z" fill="#b2b2b2" /></svg>
            </th>
            {columns.map((c) => (
              <th
                key={c}
                scope="col"
                className={`relative border-r border-r-[#b1b1b1] px-0 pt-0 font-normal ${c === 'C' ? 'border-b-2 border-b-[#217346] bg-[#d3f0e0] pb-px text-[#217346]' : 'border-b border-b-[#999] pb-[2px]'}`}>
                {c}
                {c === 'C' && <span className="absolute -right-[2px] -bottom-[6px] z-[1] h-[6px] w-[5px] border-b border-white bg-[#217346]" />}
              </th>
            ))}
          </tr>
        </thead>
        <tbody>
          {rows.map((row, ri) => (
            <tr key={ri} className="h-[25px] bg-white">
              <th scope="row" className="border-r-2 border-b border-r-[#217346] border-b-[#b5b5b5] bg-[#d2d2d2] px-0 pt-0 pb-[2px] text-center font-normal text-[#217346]">
                {ri + 1}
              </th>
              {columns.map((c, ci) => {
                const value = row[ci];
                const selected = ci === 2 && ri > 0;
                return (
                  <td
                    key={c}
                    className={`overflow-hidden border-b pt-0 pr-[2px] pb-[2px] pl-[2px] whitespace-nowrap ${columnLook(ci)} ${typeof value === 'number' ? 'text-right' : ''} ${selected ? 'border-b-[#ababab] bg-[#c6c6c6] shadow-[inset_1px_0_white,inset_-1px_0_white]' : 'border-b-[#d4d4d4]'}`}>
                    {value}
                  </td>
                );
              })}
            </tr>
          ))}
          {/* sliver of the next row, cut by the tab bar */}
          <tr className="h-[25px] bg-white" aria-hidden="true">
            <td className="border-r-2 border-r-[#217346] bg-[#d2d2d2]" />
            {columns.map((c, ci) => (
              <td key={c} className={`${columnLook(ci)} ${ci === 2 ? 'bg-[#c6c6c6]' : ''}`} />
            ))}
          </tr>
        </tbody>
      </table>
    </div>
    <div className="flex w-[19px] flex-col items-center border-l border-[#d4d4d4] pt-[2px]">
      <button aria-label="上へ" className="flex h-[15px] w-[15px] items-center justify-center border border-[#ababab] bg-white">
        <Caret className="rotate-180" />
      </button>
      <div className="w-[15px] flex-1 bg-[#dadada]"><div className="h-[54px] border border-[#ababab] bg-white" /></div>
      <button aria-label="下へ" className="flex h-[15px] w-[15px] items-center justify-center border border-[#ababab] bg-white">
        <Caret />
      </button>
    </div>
  </main>
);

const BottomBar = () => (
  <div className="flex h-[27px] bg-[#e6e6e6] text-[#444]">
    <div className="my-1 flex w-[101px] items-center border-r border-[#999] pl-[27px]">
      <button aria-label="前のシート" className="w-[29px]"><svg width="5" height="8"><path d="M4 0v8L0 4z" fill="#bbb" /></svg></button>
      <button aria-label="次のシート"><svg width="5" height="8"><path d="M0 0v8l4-4z" fill="#bbb" /></svg></button>
    </div>
    <button className="w-[135px] text-xs">データベース化する表</button>
    <button className="h-[24px] w-[72px] border-x border-b-3 border-x-[#ababab] border-b-[#217346] bg-white text-[14px] leading-6 text-[#217346]">output</button>
    <button className="my-1 w-[132px] border-r border-[#999] text-xs">参考ピボットテーブル</button>
    <button aria-label="新しいシート" className="ml-[33px] flex items-center">
      <svg width="17" height="17" viewBox="0 0 17 17" fill="none" stroke="#777">
        <circle cx="8.500" cy="8.500" r="7.500" />
        <path d="M8.500 5v7M5 8.500h7" strokeWidth="2" />
      </svg>
    </button>
    <div className="mt-[6px] mr-[19px] ml-auto flex h-[15px]">
      <svg width="17" height="15" viewBox="0 0 17 15" fill="#aaa"><path d="M0 1h2v2H0zM0 5h2v2H0zM0 9h2v2H0z" /></svg>
      <button aria-label="左へ" className="flex w-[15px] items-center justify-center border border-[#ababab] bg-white">
        <svg width="4" height="8"><path d="M4 0v8L0 4z" fill="#555" /></svg>
      </button>
      <div className="w-[702px] bg-[#dadada] pr-[30px]"><div className="h-[15px] border border-[#ababab] bg-white" /></div>
      <button aria-label="右へ" className="flex w-[15px] items-center justify-center border border-[#ababab] bg-white">
        <svg width="4" height="8"><path d="M0 0v8l4-4z" fill="#555" /></svg>
      </button>
    </div>
  </div>
);

const StatusBar = () => {
  const [zoom, setZoom] = useState(100);
  return (
    <footer className="flex h-[22px] items-center border-t border-[#c6c6c6] bg-[#f1f1f1] pl-2 text-xs text-[#555]">
      <span>準備完了</span>
      <button aria-label="マクロの記録" className="ml-5">
        <svg width="14" height="13" viewBox="0 0 14 13" fill="none" stroke="#555">
          <path d="M6 1.500h7.500v11H1.500V7" />
          <path d="M7 2h6v2H7z" fill="#555" />
          <circle cx="3" cy="3" r="2.500" fill="#555" />
          <path d="M4 7h8M4 9.500h8" strokeDasharray="2 1" strokeWidth="1.500" />
        </svg>
      </button>
      <div className="ml-auto flex gap-[17px]">
        <span>平均: 42993.91768</span>
        <span>データの個数: 414</span>
        <span>合計: 17756488</span>
      </div>
      <div className="ml-[18px] flex h-full">
        <button aria-label="標準" className="flex w-[38px] items-center justify-center bg-[#c6c6c6]">
          <svg width="14" height="13" viewBox="0 0 14 13" fill="none" stroke="#666"><path d="M.5.500h13v12H.5zM5 .5v12M9.500.500v12M.5 4.500h13M.5 8.500h13" /></svg>
        </button>
        <button aria-label="ページ レイアウト" className="flex w-[38px] items-center justify-center">
          <svg width="14" height="13" viewBox="0 0 14 13" fill="none" stroke="#666"><path d="M.5.500h13v12H.5zM3.500 2.500h7v8h-7zM5 4.500h4M5 6.500h4M5 8.500h4" /></svg>
        </button>
        <button aria-label="改ページ プレビュー" className="flex w-[38px] items-center justify-center">
          <svg width="14" height="13" viewBox="0 0 14 13" fill="none" stroke="#666"><path d="M.5.500h13v12H.5zM4.500.500v6M9.500.500v7h-9" /></svg>
        </button>
      </div>
      <button aria-label="縮小" className="mr-1 ml-[5px] flex h-full w-[7px] items-center"><span className="h-[2px] w-full bg-[#666]" /></button>
      <input
        type="range"
        aria-label="ズーム"
        min="0"
        max="200"
        value={zoom}
        onChange={(e) => setZoom(Number(e.target.value))}
        className="h-3 w-[100px] appearance-none bg-transparent [&::-webkit-slider-runnable-track]:h-px [&::-webkit-slider-runnable-track]:bg-[#999] [&::-webkit-slider-thumb]:-mt-[5px] [&::-webkit-slider-thumb]:h-[11px] [&::-webkit-slider-thumb]:w-1 [&::-webkit-slider-thumb]:appearance-none [&::-webkit-slider-thumb]:bg-[#666]"
      />
      <button aria-label="拡大" className="ml-1 flex">
        <svg width="9" height="9" stroke="#666" strokeWidth="2"><path d="M4.500.500v8M.5 4.500h8" /></svg>
      </button>
      <span className="w-[56px] pr-[9px] text-right">100%</span>
    </footer>
  );
};

/* ---------- taskbar ---------- */

const Badge = ({ top, left, right, color, accent }) => (
  <svg width="24" height="24" viewBox="0 0 24 24">
    <path d="M0 0h24v24H0z" fill={color} />
    <path d="M24 0v24H0z" fill={accent} />
    <text x="1" y="10" fontSize="10" fontWeight="700" fontFamily="Noto Sans CJK JP" fill="#fff">{top}</text>
    <path d="M9 12l-3 11" stroke={left} strokeWidth="2" />
    <path d="M11 12.500h12v10H11z" fill={right} stroke="#fff" />
    <text x="12" y="21" fontSize="9" fontFamily="Noto Sans" fill="#fff">10</text>
  </svg>
);

const Office = ({ letter, color, children }) => (
  <svg width="24" height="24" viewBox="0 0 24 24">
    <path d="M12 3h11v18H12z" fill="#fff" stroke={color} />
    {children || <path d="M14 6.500h8M14 9.500h8M14 12.500h8M14 15.500h8M14 18.500h8" stroke={color} strokeWidth="1.300" />}
    <path d="M0 3l14-3v24L0 21z" fill={color} />
    <text x="7" y="16" textAnchor="middle" fontSize="12" fontWeight="700" fontFamily="Noto Sans" fill="#fff">{letter}</text>
  </svg>
);

const Chrome = ({ children }) => (
  <svg width="26" height="26" viewBox="0 0 26 26">
    <circle cx="13" cy="13" r="11" fill="#fbc116" />
    <path d="M2 13a11 11 0 0 0 11 11l5-9-5-2-9.500-5.500A11 11 0 0 0 2 13z" fill="#1a9f5b" />
    <path d="M13 8h9.800a11 11 0 0 0-19.300-.5L8.500 16 13 13z" fill="#dd4b3e" />
    <circle cx="13" cy="13" r="5.200" fill="#fff" />
    <circle cx="13" cy="13" r="4.200" fill="#4a8af4" />
    {children}
  </svg>
);

const apps = [
  { name: 'タスク ビュー', icon: <svg width="20" height="16" viewBox="0 0 20 16" fill="none" stroke="#fff" strokeWidth="1.400"><path d="M4.500 1h11v14h-11zM3 3H.8v10H3M17 3h2.200v10H17" /></svg> },
  { name: 'Edge', open: true, icon: (
    <svg width="22" height="22" viewBox="0 0 22 22"><path d="M1 10C2 3 6 0 11.500 0 18 0 21 5 21 12H8c0 4 3 6 6 6 2 0 4-.5 6-1.500V21c-2 1-4 1-7 1C7 22 3 18 4 13c.4-3 2-5 4-6-1.300 1-1.500 2-1.600 2.500H15C15 6 13 4.500 10 4.500 6 4.500 3 6.500 1 10z" fill="#0078d7" /></svg>
  ) },
  { name: 'エクスプローラー', open: true, icon: (
    <svg width="22" height="19" viewBox="0 0 22 19"><path d="M0 1h8l2 2h12v14H0z" fill="#f6cf5c" /><path d="M0 5h22v12H0z" fill="#fde79a" /><path d="M4 18v-8h14v8h-4v-4H8v4z" fill="#3fb4e6" /></svg>
  ) },
  { name: 'ストア', icon: (
    <svg width="22" height="24" viewBox="0 0 22 24"><path d="M0 6l22-1-1 17-8 2-12-2z" fill="#fff" /><path d="M5 6c0-7 8-7 9 0M8 5c1-5 7-5 8 0" fill="none" stroke="#fff" strokeWidth="1.400" /><path d="M5 11l5-1v4H5zM11 10l6-1v5h-6zM5 15h5v4l-5-1zM11 15h6v5l-6-1z" fill="#07101c" /></svg>
  ) },
  { name: '勘定奉行', open: true, icon: <Badge top="勘" left="#f2c14e" right="#e04a4a" color="#a5306f" accent="#df4c47" /> },
  { name: 'Word', open: true, icon: <Office letter="W" color="#2b579a" /> },
  { name: 'Outlook', open: true, icon: (
    <svg width="26" height="26" viewBox="0 0 26 26">
      <path d="M13 6h10v9H13z" fill="#fff" stroke="#0072c6" />
      <path d="M14 9l4 3 5-5" stroke="#0072c6" fill="none" strokeWidth="2" />
      <path d="M1 4l13-3v23L1 21z" fill="#0072c6" />
      <text x="7" y="16" textAnchor="middle" fontSize="12" fontWeight="700" fontFamily="Noto Sans" fill="#fff">O</text>
      <path d="M11 15h15v11H11z" fill="#f0b673" />
      <path d="M11 15l7.500 6.500L26 15" stroke="#fff" fill="none" />
    </svg>
  ) },
  { name: 'Firefox', open: true, icon: (
    <svg width="24" height="24" viewBox="0 0 24 24"><circle cx="12" cy="11" r="10" fill="#2b6cb8" /><path d="M2 4c1 1 2 1 4 1l3-3c0 2 0 3 2 4 1 0 2 1 1 2l-3 2c0 3 4 4 6 3-2 3-5 3-7 2 3 4 12 3 11-5 1 1 1 2 1 3 1-4-1-8-3-11 6 3 8 8 6 13-3 8-13 11-19 5C0 16-1 10 2 4z" fill="#e8701a" /><path d="M18 3c5 4 6 9 3 14 0-4-1-9-3-14z" fill="#fbc02d" /></svg>
  ) },
  { name: 'Internet Explorer', open: true, icon: (
    <svg width="24" height="24" viewBox="0 0 24 24" fill="none"><path d="M20 15a8 7.500 0 1 1 .5-4H6" stroke="#5cc4f4" strokeWidth="4" /><path d="M3 22C-2 20 6 7 14 3c6-3 9-2 7 3" stroke="#f6c945" strokeWidth="2" /></svg>
  ) },
  { name: 'Chrome', icon: <Chrome /> },
  { name: 'PowerPoint', icon: (
    <Office letter="P" color="#d24726"><path d="M14 15.500h8M14 18.500h8" stroke="#d24726" /><circle cx="18" cy="9" r="3.500" fill="#d24726" /><path d="M18 9V5M18 9h4" stroke="#fff" /></Office>
  ) },
  { name: 'Excel', open: true, active: true, icon: (
    <Office letter="X" color="#217346"><path d="M14 6.500h8M14 9.500h8M14 12.500h8M14 15.500h8M14 18.500h8M18 4v16" stroke="#217346" /></Office>
  ) },
  { name: '付箋', open: true, icon: (
    <svg width="18" height="18" viewBox="0 0 18 18"><path d="M0 0h18v11l-7 7H0z" fill="#f3e692" /><path d="M18 11h-7v7z" fill="#8d8648" /></svg>
  ) },
  { name: '電卓', icon: (
    <svg width="18" height="23" viewBox="0 0 18 23"><path d="M0 0h18v23H0z" fill="#fff" /><path d="M2 2h14v4H2z" fill="#07101c" /><path d="M3 9.500h12M3 13.500h12M3 17.500h12" stroke="#07101c" strokeWidth="2" strokeDasharray="3 1.500" /></svg>
  ) },
  { name: 'カレンダー', open: true, icon: (
    <svg width="20" height="23" viewBox="0 0 20 23"><path d="M0 2h3V0h3v2h2V0h3v2h3V0h3v2h3v21H0z" fill="#fff" /><path d="M1.500 8h17v13.500h-17z" fill="#07101c" /><path d="M6 11.500h11M3 15h14M3 18.500h10" stroke="#fff" strokeWidth="2" strokeDasharray="2 2" /></svg>
  ) },
  { name: '償却奉行', icon: <Badge top="償" left="#f2c14e" right="#532a55" color="#532a55" accent="#532a55" /> },
  { name: 'Chrome ユーザー', open: true, icon: (
    <Chrome><path d="M11 11h15v15H11z" fill="#8ab4f8" /><circle cx="18.500" cy="16" r="3" fill="#3566d6" /><path d="M13 26v-3q5.500-5 11 0v3z" fill="#3566d6" /></Chrome>
  ) },
  { name: 'リモート デスクトップ', open: true, icon: (
    <svg width="23" height="20" viewBox="0 0 23 20"><path d="M4.500.500h18v14h-18z" fill="#ddd" stroke="#aaa" /><path d="M.5 4.500h18v15H.5z" fill="#eee" stroke="#aaa" /><path d="M3 18a6.500 7 0 0 1 13 0z" fill="#dd4b3e" /><path d="M3 18q0-4 2-5l3 5z" fill="#1a9f5b" /><path d="M16 18q0-4-2-5l-3 5z" fill="#fbc116" /><circle cx="9.500" cy="16" r="2.500" fill="#4a8af4" stroke="#fff" /></svg>
  ) },
];

const Taskbar = () => (
  <div className="flex h-10 border-t border-[#222] bg-[#07101c] text-white">
    <button aria-label="スタート" className="flex w-12 items-center justify-center">
      <svg width="16" height="16" viewBox="0 0 16 16" fill="#fff"><path d="M0 2l7-1v6.500H0zM8 1l8-1v7.500H8zM0 8.500h7V15l-7-1zM8 8.500h8V16l-8-1z" /></svg>
    </button>
    <label className="flex w-[344px] items-center gap-[6px] bg-[#333] pr-[14px] pl-[9px]">
      <svg width="21" height="21" viewBox="0 0 21 21" fill="none" stroke="#eee" strokeWidth="3"><circle cx="10.500" cy="10.500" r="8.500" /></svg>
      <input placeholder="ここに入力して検索" className="min-w-0 flex-1 bg-transparent text-[13px] placeholder:text-[#999]" />
      <svg width="12" height="17" viewBox="0 0 12 17" fill="none" stroke="#aaa"><path d="M3.500 1.500q0-1 1-1h3q1 0 1 1v9h-5zM.5 8v4q0 1.500 1.500 1.500h8q1.500 0 1.500-1.500V8M6 13.500v3M3.500 16.500h5" /></svg>
    </label>
    {apps.map((a) => (
      <button key={a.name} aria-label={a.name} className={`flex w-[49px] flex-col items-center ${a.active ? 'bg-[#3c434d]' : ''}`}>
        <span className="flex flex-1 items-center pt-px">{a.icon}</span>
        <span className={`h-[2px] ${a.active ? 'w-full' : 'w-10'} ${a.open ? 'bg-[#76b9ed]' : ''}`} />
      </button>
    ))}
    <div className="ml-auto flex items-center">
      <svg width="12" height="7" viewBox="0 0 12 7" fill="none" stroke="#fff" strokeWidth="1.200"><path d="M.5 6.500L6 1l5.500 5.500" /></svg>
      <svg width="17" height="12" viewBox="0 0 17 12" fill="none" stroke="#fff" className="ml-[10px]"><path d="M4.500 3.500h10v7h-10zM15.500 5v4M.5 1.500h5v3h-5zM3 4.500v3M1.500 0v1.500M4.500 0v1.500" /><path d="M6 5h7v4H6z" fill="#fff" /></svg>
      <svg width="17" height="11" viewBox="0 0 17 11" fill="#fff" className="ml-[7px]"><path d="M0 8c0-2 1-3 3-3 1-4 6-6 9-2 1 1 1 2 1 2 3 0 4 2 4 3s-1 3-3 3H3c-2 0-3-1-3-3z" /></svg>
      <svg width="16" height="13" viewBox="0 0 16 13" fill="none" stroke="#fff" className="ml-[7px]"><path d="M.5 4.500h2l4-4v12l-4-4h-2zM9.500 4l5 5M14.500 4l-5 5" /></svg>
      <span className="ml-[7px] w-4 text-sm">あ</span>
      <div className="ml-[9px] w-[60px] text-center text-[11px] leading-[18px] whitespace-nowrap">
        19:57
        <br />
        2017/07/20
      </div>
      <button aria-label="通知" className="mr-5 ml-[17px]">
        <svg width="16" height="16" viewBox="0 0 16 16"><path d="M0 0h16v12h-6l-2.500 4L6 12H0z" fill="#fff" /><path d="M3 3.500h10M3 6.500h10M3 9.500h6" stroke="#07101c" /></svg>
      </button>
      <span className="mr-1 h-10 w-px bg-[#555]" />
    </div>
  </div>
);

export default function App() {
  return (
    <div className="flex h-screen flex-col overflow-hidden font-['Noto_Sans','Noto_Sans_CJK_JP',sans-serif] [font-feature-settings:'palt']">
      <TitleBar />
      <Ribbon />
      <FormulaBar />
      <Sheet />
      <BottomBar />
      <StatusBar />
      <Taskbar />
    </div>
  );
}
